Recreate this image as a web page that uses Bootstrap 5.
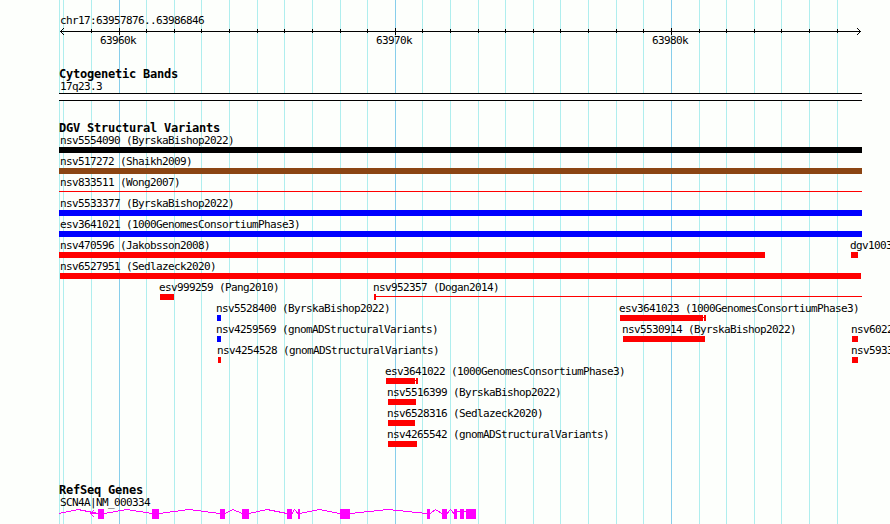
<!DOCTYPE html>
<html lang="en">
<head>
<meta charset="utf-8">
<meta name="viewport" content="width=device-width, initial-scale=1">
<title>chr17:63957876..63986846</title>
<link href="https://cdn.jsdelivr.net/npm/bootstrap@5.3.0/dist/css/bootstrap.min.css" rel="stylesheet">
<style>
body { background: #fdfffc; color: #000; font: 11px/12px "DejaVu Sans Mono", monospace; letter-spacing: -.622px; }
.browser { width: 890px; height: 524px; }
.grid-layer { position: absolute; inset: 0; }
.track-title { font-size: 12px; line-height: 13px; font-weight: 700; letter-spacing: -.224px; margin: 0; padding-left: 59px; }
svg { display: block; shape-rendering: crispEdges; }
.region { padding: 15px 0 0 60px; }
.scale-label { position: absolute; top: 8px; }
.cyto { padding-top: 17px; }
.cyto-name { padding-left: 60px; height: 12px; }
.cyto-band { margin-left: 59px; width: 803px; height: 8px; background: #fff; border: solid #000; border-width: 1px 0; }
.variants { padding-top: 21px; }
.lane { position: relative; height: 21px; }
.feat { position: absolute; top: 0; white-space: nowrap; }
.feat > span { display: block; height: 12px; margin-left: -1px; }
.edge > span { margin-left: 1px; }
.glyph { height: 6px; background: red; }
.black { background: #000; } .brown { background: #8b4513; } .blue { background: #00f; }
.thin { height: 1px; margin-top: 2px; }
.refseq { padding-top: 34px; }
.gene-name { padding-left: 60px; height: 12px; }
</style>
<script src="https://cdn.jsdelivr.net/npm/bootstrap@5.3.0/dist/js/bootstrap.bundle.min.js"></script>
</head>
<body>
<main class="browser position-relative overflow-hidden">
  <svg class="grid-layer" width="890" height="524" aria-hidden="true">
    <path stroke="#afeeee" d="M59.5 0V524M63.5 0V524M91.5 0V524M146.5 0V524M174.5 0V524M201.5 0V524M229.5 0V524M257.5 0V524M284.5 0V524M312.5 0V524M340.5 0V524M367.5 0V524M422.5 0V524M450.5 0V524M478.5 0V524M505.5 0V524M533.5 0V524M560.5 0V524M588.5 0V524M616.5 0V524M643.5 0V524M699.5 0V524M726.5 0V524M754.5 0V524M781.5 0V524M809.5 0V524M837.5 0V524"/>
    <path stroke="#87ceeb" d="M119.5 0V524M395.5 0V524M671.5 0V524"/>
  </svg>
  <div class="position-relative">
    <header class="region">chr17:63957876..63986846</header>
    <div class="position-relative">
      <svg width="890" height="24" viewBox="0 27 890 24" fill="none" stroke="#000">
        <path d="M60 31.5H861M119.5 28V35M395.5 28V35M671.5 28V35"/>
        <path d="M91.5 29V33M146.5 29V33M174.5 29V33M201.5 29V33M229.5 29V33M257.5 29V33M284.5 29V33M312.5 29V33M340.5 29V33M367.5 29V33M422.5 29V33M450.5 29V33M478.5 29V33M505.5 29V33M533.5 29V33M560.5 29V33M588.5 29V33M616.5 29V33M643.5 29V33M699.5 29V33M726.5 29V33M754.5 29V33M781.5 29V33M809.5 29V33M837.5 29V33"/>
        <path stroke="none" fill="#000" d="M61 30h1v1h-1zM62 29h1v1h-1zM63 28h1v1h-1zM61 32h1v1h-1zM62 33h1v1h-1zM63 34h1v1h-1zM859 30h1v1h-1zM858 29h1v1h-1zM857 28h1v1h-1zM859 32h1v1h-1zM858 33h1v1h-1zM857 34h1v1h-1z"/>
      </svg>
      <span class="scale-label" style="left:100px">63960k</span>
      <span class="scale-label" style="left:376px">63970k</span>
      <span class="scale-label" style="left:652px">63980k</span>
    </div>
    <section class="cyto">
      <h2 class="track-title">Cytogenetic Bands</h2>
      <div class="cyto-name">17q23.3</div>
      <div class="cyto-band"></div>
    </section>
    <section class="variants">
      <h2 class="track-title">DGV Structural Variants</h2>
      <div class="lane"><div class="feat edge" style="left:59px"><span>nsv5554090 (ByrskaBishop2022)</span><div class="glyph black" style="width:803px"></div></div></div>
      <div class="lane"><div class="feat edge" style="left:59px"><span>nsv517272 (Shaikh2009)</span><div class="glyph brown" style="width:803px"></div></div></div>
      <div class="lane"><div class="feat edge" style="left:59px"><span>nsv833511 (Wong2007)</span><div class="glyph thin" style="width:803px"></div></div></div>
      <div class="lane"><div class="feat edge" style="left:59px"><span>nsv5533377 (ByrskaBishop2022)</span><div class="glyph blue" style="width:803px"></div></div></div>
      <div class="lane"><div class="feat edge" style="left:59px"><span>esv3641021 (1000GenomesConsortiumPhase3)</span><div class="glyph blue" style="width:803px"></div></div></div>
      <div class="lane">
        <div class="feat edge" style="left:59px"><span>nsv470596 (Jakobsson2008)</span><div class="glyph" style="width:706px"></div></div>
        <div class="feat" style="left:851px"><span>dgv1003</span><div class="glyph" style="width:7px"></div></div>
      </div>
      <div class="lane"><div class="feat" style="left:60px"><span class="ms-0">nsv6527951 (Sedlazeck2020)</span><div class="glyph" style="width:801px"></div></div></div>
      <div class="lane">
        <div class="feat" style="left:160px"><span>esv999259 (Pang2010)</span><div class="glyph" style="width:14px"></div></div>
        <div class="feat" style="left:374px"><span>nsv952357 (Dogan2014)</span><svg width="488" height="6" fill="red"><path d="M0 0h2v6h-2zM2 2h486v1h-486z"/></svg></div>
      </div>
      <div class="lane">
        <div class="feat" style="left:217px"><span>nsv5528400 (ByrskaBishop2022)</span><div class="glyph blue" style="width:4px"></div></div>
        <div class="feat" style="left:620px"><span>esv3641023 (1000GenomesConsortiumPhase3)</span><svg width="86" height="6" fill="red"><path d="M0 0h83v6h-83zM83 2h1v1h-1zM84 0h2v6h-2z"/></svg></div>
      </div>
      <div class="lane">
        <div class="feat" style="left:217px"><span>nsv4259569 (gnomADStructuralVariants)</span><div class="glyph blue" style="width:4px"></div></div>
        <div class="feat" style="left:623px"><span>nsv5530914 (ByrskaBishop2022)</span><div class="glyph" style="width:82px"></div></div>
        <div class="feat" style="left:852px"><span>nsv6022</span><div class="glyph" style="width:6px"></div></div>
      </div>
      <div class="lane">
        <div class="feat" style="left:218px"><span>nsv4254528 (gnomADStructuralVariants)</span><div class="glyph" style="width:3px"></div></div>
        <div class="feat" style="left:852px"><span>nsv5933</span><div class="glyph" style="width:6px"></div></div>
      </div>
      <div class="lane"><div class="feat" style="left:386px"><span>esv3641022 (1000GenomesConsortiumPhase3)</span><svg width="32" height="6" fill="red"><path d="M0 0h29v6h-29zM29 2h1v1h-1zM30 0h2v6h-2z"/></svg></div></div>
      <div class="lane"><div class="feat" style="left:388px"><span>nsv5516399 (ByrskaBishop2022)</span><div class="glyph" style="width:28px"></div></div></div>
      <div class="lane"><div class="feat" style="left:388px"><span>nsv6528316 (Sedlazeck2020)</span><div class="glyph" style="width:27px"></div></div></div>
      <div class="lane"><div class="feat" style="left:388px"><span>nsv4265542 (gnomADStructuralVariants)</span><div class="glyph" style="width:29px"></div></div></div>
    </section>
    <section class="refseq">
      <h2 class="track-title">RefSeq Genes</h2>
      <div class="gene-name">SCN4A|NM_000334</div>
      <svg width="890" height="15" viewBox="0 509 890 15">
        <path fill="#f0f" d="M98 509h6v10h-6zM152 509h7v10h-7zM220 509h5v10h-5zM242 509h7v10h-7zM287 509h5v10h-5zM298 509h2v10h-2zM340 509h10v10h-10zM427 509h3v10h-3zM442 509h5v10h-5zM454 509h3v10h-3zM460 509h4v10h-4zM466 509h10v10h-10z"/>
        <path fill="#f0f" d="M90 513h8v1h-8zM91 512h1v1h-1zM92 511h1v1h-1zM93 510h1v1h-1zM91 514h1v1h-1zM92 515h1v1h-1zM93 516h1v1h-1z"/>
        <path fill="none" stroke="#f0f" d="M59 513.5L78 509.5L98 513.5M104 513.5L127 509.5L152 513.5M159 513.5L189 509.5L220 513.5M225 513.5L233 509.5L242 513.5M249 513.5L267 509.5L287 513.5M292 513.5L294.5 509.5L298 513.5M300 513.5L319 509.5L340 513.5M350 513.5L388 509.5L427 513.5M430 513.5L435.5 509.5L442 513.5M447 513.5L450.5 509.5L454 513.5M457 511.5H460M464 511.5H466"/>
      </svg>
    </section>
  </div>
</main>
</body>
</html>
